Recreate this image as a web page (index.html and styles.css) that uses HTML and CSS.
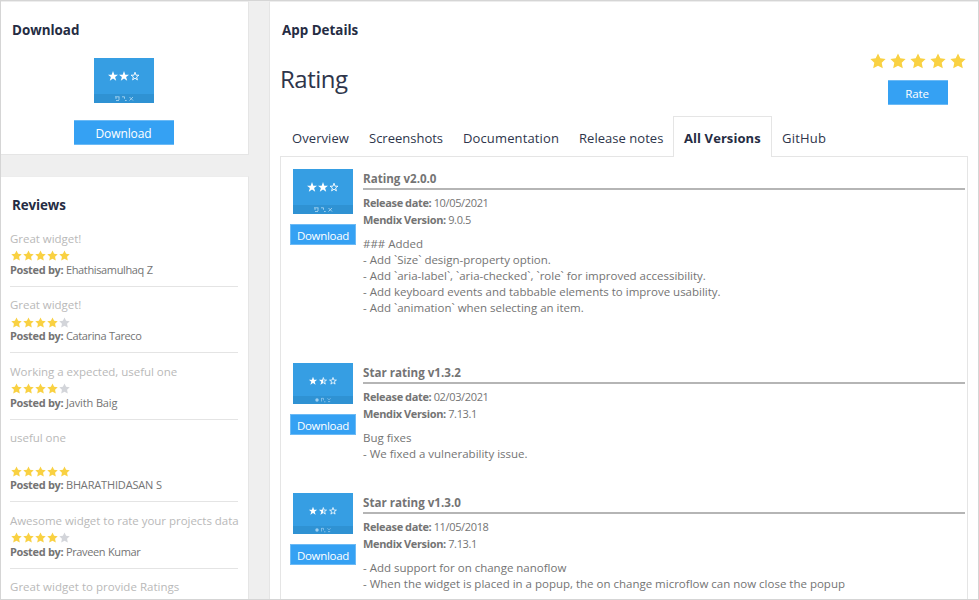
FILE: index.html
```html
<!DOCTYPE html>
<html lang="en">
<head>
<meta charset="utf-8">
<title>Rating</title>
<link rel="stylesheet" href="styles.css">
</head>
<body>
<svg class="defs" width="0" height="0">
  <symbol id="star" viewBox="0 0 16 16"><path d="M8 .6l2.300 4.700 5.300.8-3.900 3.600 1.100 5.500L8 12.700l-4.800 2.500 1.100-5.500L.4 6.100l5.300-.8z" stroke-linejoin="round"/></symbol>
  <symbol id="thumb" viewBox="0 0 60 45" preserveAspectRatio="none">
    <rect width="60" height="45" fill="#369ee3"/><rect y="36" width="60" height="9" fill="#2f92d3"/>
    <g fill="#fff"><path id="s" d="M19 13l1.300 3.700h3.700l-2.900 2.300 1.100 3.800-3.200-2.300-3.200 2.300 1.100-3.800-2.900-2.300h3.700z"/><use href="#s" x="11"/></g>
    <path d="M41 14.200l1 3h2.900l-2.300 1.800.8 2.900-2.400-1.700-2.400 1.700.8-2.900-2.300-1.800h2.900z" fill="none" stroke="#fff" stroke-width=".9"/>
    <g fill="none" stroke="#b5daf3" stroke-width=".8"><path d="M21 38.800h4.500M22 42.500h3M22 39v2M25 39v3M28 38.800h2.500v2M31 42.500h1.700M35.500 39l3.500 3.500M39 39l-3.500 3.500"/></g>
  </symbol>
  <symbol id="thumb-half" viewBox="0 0 60 41">
    <rect width="60" height="41" fill="#369ee3"/><rect y="33" width="60" height="8" fill="#2f92d3"/>
    <path d="M20 13.800l1.100 3h3l-2.400 1.900.9 3.100-2.600-1.900-2.600 1.900.9-3.100-2.400-1.900h3zM30.300 13.800v6.100l-2.900 1.900.9-3.100-2.400-1.900h3.300z" fill="#fff"/>
    <path d="M30.300 14.500l.9 2.600h2.300l-1.900 1.500.7 2.500-2-1.400M40 14.500l.9 2.600h2.500l-2 1.500.7 2.500-2.100-1.500-2.100 1.500.7-2.500-2-1.500h2.500z" fill="none" stroke="#fff" stroke-width=".8"/>
    <circle cx="24" cy="37" r="1.700" fill="#9fcff0"/>
    <path d="M28.500 35v3.500M28.500 35.300h2v2M31 38.800h1.500M34.500 35.300l1.500 1.500 1.500-1.500M35 38.600h2.200" fill="none" stroke="#9fcff0" stroke-width=".7"/>
  </symbol>
</svg>
<div class="page">
  <aside class="side">
    <section class="panel download-panel">
      <h2>Download</h2>
      <svg class="thumb"><use href="#thumb"/></svg>
      <button class="btn btn-wide">Download</button>
    </section>
    <section class="panel reviews">
      <h2 class="h-reviews">Reviews</h2>
      <article class="review"><p class="title">Great widget!</p><div class="stars"><svg><use href="#star"/></svg><svg><use href="#star"/></svg><svg><use href="#star"/></svg><svg><use href="#star"/></svg><svg><use href="#star"/></svg></div><p class="by"><b>Posted by:</b> <span>Ehathisamulhaq Z</span></p></article>
      <article class="review"><p class="title">Great widget!</p><div class="stars"><svg><use href="#star"/></svg><svg><use href="#star"/></svg><svg><use href="#star"/></svg><svg><use href="#star"/></svg><svg class="off"><use href="#star"/></svg></div><p class="by"><b>Posted by:</b> <span>Catarina Tareco</span></p></article>
      <article class="review"><p class="title">Working a expected, useful one</p><div class="stars"><svg><use href="#star"/></svg><svg><use href="#star"/></svg><svg><use href="#star"/></svg><svg><use href="#star"/></svg><svg class="off"><use href="#star"/></svg></div><p class="by"><b>Posted by:</b> <span class="wide">Javith Baig</span></p></article>
      <article class="review"><p class="title tall">useful one</p><div class="stars"><svg><use href="#star"/></svg><svg><use href="#star"/></svg><svg><use href="#star"/></svg><svg><use href="#star"/></svg><svg><use href="#star"/></svg></div><p class="by"><b>Posted by:</b> <span class="wide">BHARATHIDASAN S</span></p></article>
      <article class="review"><p class="title">Awesome widget to rate your projects data</p><div class="stars"><svg><use href="#star"/></svg><svg><use href="#star"/></svg><svg><use href="#star"/></svg><svg><use href="#star"/></svg><svg class="off"><use href="#star"/></svg></div><p class="by"><b>Posted by:</b> <span>Praveen Kumar</span></p></article>
      <article class="review"><p class="title last">Great widget to provide Ratings</p></article>
    </section>
  </aside>
  <main class="main">
    <h2>App Details</h2>
    <header class="app-head">
      <h1>Rating</h1>
      <div class="rate">
        <div class="stars big"><svg><use href="#star"/></svg><svg><use href="#star"/></svg><svg><use href="#star"/></svg><svg><use href="#star"/></svg><svg><use href="#star"/></svg></div>
        <button class="btn btn-rate">Rate</button>
      </div>
    </header>
    <nav class="tabs">
      <a class="t-overview">Overview</a><a class="t-shots">Screenshots</a><a class="t-docs">Documentation</a><a class="t-notes">Release notes</a><a class="t-all active">All Versions</a><a class="t-git">GitHub</a>
    </nav>
    <div class="versions">
      <article class="version long">
        <div class="get"><svg class="thumb"><use href="#thumb"/></svg><button class="btn btn-small">Download</button></div>
        <div class="info">
          <h3>Rating v2.0.0</h3>
          <p class="meta"><b>Release date:</b> <span>10/05/2021</span></p>
          <p class="meta"><b>Mendix Version:</b> <span>9.0.5</span></p>
          <div class="notes"><p>### Added</p><p>- Add `Size` design-property option.</p><p>- Add `aria-label`, `aria-checked`, `role` for improved accessibility.</p><p>- Add keyboard events and tabbable elements to improve usability.</p><p>- Add `animation` when selecting an item.</p></div>
        </div>
      </article>
      <article class="version">
        <div class="get"><svg class="thumb short"><use href="#thumb-half"/></svg><button class="btn btn-small">Download</button></div>
        <div class="info">
          <h3>Star rating v1.3.2</h3>
          <p class="meta"><b>Release date:</b> <span>02/03/2021</span></p>
          <p class="meta"><b>Mendix Version:</b> <span>7.13.1</span></p>
          <div class="notes"><p>Bug fixes</p><p>- We fixed a vulnerability issue.</p></div>
        </div>
      </article>
      <article class="version">
        <div class="get"><svg class="thumb short"><use href="#thumb-half"/></svg><button class="btn btn-small">Download</button></div>
        <div class="info">
          <h3>Star rating v1.3.0</h3>
          <p class="meta"><b>Release date:</b> <span>11/05/2018</span></p>
          <p class="meta"><b>Mendix Version:</b> <span>7.13.1</span></p>
          <div class="notes"><p>- Add support for on change nanoflow</p><p>- When the widget is placed in a popup, the on change microflow can now close the popup</p></div>
        </div>
      </article>
    </div>
  </main>
</div>
</body>
</html>
```
FILE: styles.css
```css
* { box-sizing: border-box; margin: 0; padding: 0; }
body {
  font-family: "Open Sans", "Noto Sans", sans-serif;
  font-size: 11.5px;
  color: #747474;
  overflow: hidden;
}
.defs { display: block; height: 0; }
svg { display: block; flex: none; }
.page {
  display: flex;
  gap: 20px;
  height: 600px;
  border: 1px solid #d5d5d5;
  background: #efefef;
  overflow: hidden;
}
.side { width: 248px; flex: none; display: flex; flex-direction: column; gap: 21px; }
.panel, .main { background: #fff; border: 1px solid #e5e5e5; border-top-color: #ededed; }
.panel { border-left: 0; }
.download-panel { height: 154px; flex: none; display: flex; flex-direction: column; align-items: center; padding-right: 2px; }
h2 {
  align-self: flex-start;
  padding-left: 11px;
  margin-top: 17px;
  line-height: 22px;
  font-size: 13.4px;
  font-weight: 700;
  color: #252c43;
}
.download-panel .thumb { margin-top: 17px; }
.thumb { width: 60px; height: 45px; }
.thumb.short { height: 41px; }
.btn {
  display: block;
  border: 1px solid #6cbaf5;
  border-width: 1px 0;
  background: #35a1f3;
  color: #fff;
  font-family: inherit;
  white-space: nowrap;
}
.btn-wide { width: 100px; height: 25px; margin-top: 17px; padding-top: 3px; font-size: 12px; letter-spacing: -.1px; line-height: 20px; }
.reviews { flex: 1 0 440px; }
.h-reviews { letter-spacing: -.1px; }
.review { margin: 0 10px 0 9px; padding: 9.5px 0 10px; border-bottom: 1px solid #e4e4e4; }
.h-reviews + .review { margin-top: 4.4px; }
.title { height: 18px; line-height: 18px; color: #b9b9b9; letter-spacing: -.03px; white-space: nowrap; }
.title.tall { height: 34px; }
.title.last { letter-spacing: .02px; }
.stars { display: flex; height: 16px; align-items: center; padding-left: .5px; gap: 1px; }
.stars svg { width: 11px; height: 11px; fill: #f9d142; }
.stars svg.off { fill: #d3d5da; }
.by { height: 12px; line-height: 12px; font-size: 11px; letter-spacing: -.36px; word-spacing: .2px; white-space: nowrap; }
.by .wide { letter-spacing: -.16px; }
.main { flex: 1; border-right: 0; border-bottom: 0; min-width: 0; }
.main h2 { padding-left: 12px; }
.app-head { display: flex; justify-content: space-between; height: 75px; padding-left: 10px; }
h1 { margin-top: 20px; line-height: 36px; font-size: 24px; letter-spacing: -.5px; font-weight: 400; color: #2e354b; }
.rate { width: 108px; padding-top: 12px; }
.stars.big { gap: 4px; padding-left: 0; }
.stars.big svg { width: 16px; height: 16px; }
.btn-rate { width: 60px; height: 25px; margin: 11px 2px 0 18px; padding: 3px 2px 0 0; font-size: 11.5px; letter-spacing: -.1px; line-height: 20px; }
.tabs { display: flex; height: 41px; padding-left: 11px; font-size: 13px; line-height: 42px; color: #2e354b; position: relative; z-index: 1; }
.tabs a { padding-left: 11px; white-space: nowrap; border: 1px solid transparent; border-width: 1px 1px 0 0; }
.t-overview { width: 77px; letter-spacing: .08px; }
.t-shots { width: 94px; }
.t-docs { width: 116px; letter-spacing: .13px; }
.t-notes { width: 105px; letter-spacing: .04px; }
.t-all { width: 99px; letter-spacing: .08px; }
.t-git { letter-spacing: .2px; }
.tabs .active { padding-left: 10px; font-weight: 700; background: #fff; border: 1px solid #e5e5e5; border-bottom: 0; color: #252c43; }
.tabs .t-git { padding-left: 10px; }
.versions { width: 688px; height: 460px; margin: -1px 0 0 10px; padding: 12px 2px 0 9px; border: 1px solid #e5e5e5; }
.version { display: flex; height: 130px; }
.version.long { height: 194px; }
.get { width: 73px; flex: none; }
.get .thumb { margin-left: 3px; }
.btn-small { width: 66px; height: 21px; margin-top: 10px; padding-top: 2px; font-size: 11.5px; letter-spacing: -.3px; line-height: 17px; border-width: 1px; }
.info { flex: 1; min-width: 0; }
h3 { height: 21px; line-height: 19px; font-size: 11.6px; border-bottom: 2px solid #b5b5b5; margin-bottom: 4px; }
.meta { height: 17px; line-height: 17px; font-size: 11px; letter-spacing: -.35px; word-spacing: -.2px; }
.notes { margin-top: 7.5px; line-height: 16px; letter-spacing: -.005px; }
```
